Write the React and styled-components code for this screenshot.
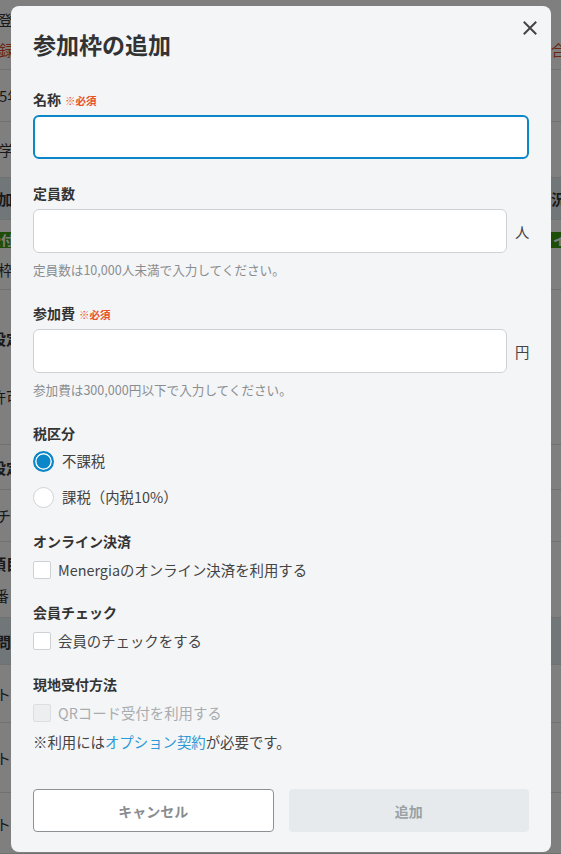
import React from 'react';
import styled, { createGlobalStyle } from 'styled-components';

const GlobalStyle = createGlobalStyle`
  html, body {
    margin: 0;
    padding: 0;
    height: 100%;
    overflow: hidden;
  }
  body {
    font-family: "Noto Sans CJK JP", "Noto Sans", sans-serif;
    color: #333;
    background: #fff;
  }
  * {
    box-sizing: border-box;
  }
`;

// background page rows (only the edges peek out around the dialog)
const bgRows = [
  { h: 70, lines: [{ l: '登録', s: -2, r: '' }, { l: '録', s: -1, r: '合', red: true }] },
  { h: 52, lines: [{ l: '2025年', s: -26, r: '' }] },
  { h: 56, lines: [{ l: '学', s: -1, r: '' }] },
  { h: 42, head: true, lines: [{ l: '参加枠', s: -17, r: '況', bold: true }] },
  { h: 70, lines: [{ l: '受付中', s: -16, r: 'イ', badge: true }, { l: '枠', s: -2, r: '' }] },
  { h: 155, lines: [{ l: '設定', s: -9, r: '', bold: true }, { l: '許可', s: -9, r: '' }] },
  { h: 45, lines: [{ l: '設定', s: -9, r: '', bold: true }] },
  { h: 52, lines: [{ l: 'チャ', s: -4, r: '' }] },
  { h: 76, lines: [{ l: '項目', s: -9, r: '', bold: true }, { l: '番', s: -6, r: '' }] },
  { h: 47, head: true, lines: [{ l: '問文', s: -4, r: '', bold: true }] },
  { h: 58, lines: [{ l: 'ト', s: -4, r: '' }] },
  { h: 70, lines: [{ l: 'ト', s: -4, r: '' }] },
  { h: 61, lines: [{ l: 'ト', s: -4, r: '' }] },
];

const App = () => {
  return (
    <>
      <GlobalStyle />
      <Page>
        {bgRows.map((row, i) => (
          <BgRow key={i} h={row.h} head={row.head}>
            {row.lines.map((ln, j) => (
              <BgLine key={j}>
                {ln.badge ? (
                  <BgBadge shift={ln.s}>{ln.l}</BgBadge>
                ) : (
                  <BgLeft shift={ln.s} bold={ln.bold} red={ln.red}>
                    {ln.l}
                  </BgLeft>
                )}
                {ln.r &&
                  (ln.badge ? (
                    <BgRightBadge>{ln.r}</BgRightBadge>
                  ) : (
                    <BgRight bold={ln.bold} red={ln.red}>
                      {ln.r}
                    </BgRight>
                  ))}
              </BgLine>
            ))}
          </BgRow>
        ))}
      </Page>

      <Overlay>
        <Modal>
          <Title>参加枠の追加</Title>
          <CloseButton aria-label='閉じる'>
            <svg width='14' height='14' viewBox='0 0 14 14'>
              <path
                d='M1.5 1.5 L12.5 12.5 M12.5 1.5 L1.5 12.5'
                stroke='#444'
                strokeWidth='2'
                strokeLinecap='square'
              />
            </svg>
          </CloseButton>

          <Field first>
            <Label>
              名称<Required>※必須</Required>
            </Label>
            <Input focused />
          </Field>

          <Field>
            <Label>定員数</Label>
            <InputRow>
              <Input />
              <Unit>人</Unit>
            </InputRow>
            <Help>定員数は10,000人未満で入力してください。</Help>
          </Field>

          <Field>
            <Label>
              参加費<Required>※必須</Required>
            </Label>
            <InputRow>
              <Input />
              <Unit>円</Unit>
            </InputRow>
            <Help>参加費は300,000円以下で入力してください。</Help>
          </Field>

          <Field>
            <Label tight>税区分</Label>
            <RadioRow>
              <Radio checked />
              <OptionText>不課税</OptionText>
            </RadioRow>
            <RadioRow>
              <Radio />
              <OptionText>課税（内税10%）</OptionText>
            </RadioRow>
          </Field>

          <Field gap={16}>
            <Label>オンライン決済</Label>
            <CheckRow>
              <Check />
              <OptionText>Menergiaのオンライン決済を利用する</OptionText>
            </CheckRow>
          </Field>

          <Field gap={20}>
            <Label>会員チェック</Label>
            <CheckRow>
              <Check />
              <OptionText>会員のチェックをする</OptionText>
            </CheckRow>
          </Field>

          <Field gap={21}>
            <Label>現地受付方法</Label>
            <CheckRow>
              <Check disabled />
              <OptionText disabled>QRコード受付を利用する</OptionText>
            </CheckRow>
            <Note>
              ※利用には<Link>オプション契約</Link>が必要です。
            </Note>
          </Field>

          <Footer>
            <CancelButton>キャンセル</CancelButton>
            <SubmitButton>追加</SubmitButton>
          </Footer>
        </Modal>
      </Overlay>
    </>
  );
};

const Page = styled.div`
  width: 100%;
  height: 100vh;
  overflow: hidden;
  background: #fff;
`;
const BgRow = styled.div`
  height: ${(p) => p.h}px;
  display: flex;
  flex-direction: column;
  justify-content: space-evenly;
  border-bottom: 1px solid #e2e2e2;
  background: ${(p) => (p.head ? '#e3ecf3' : '#fff')};
`;
const BgLine = styled.div`
  display: flex;
  align-items: center;
  height: 20px;
  white-space: nowrap;
`;
const BgLeft = styled.span`
  margin-left: ${(p) => p.shift}px;
  font-size: 15px;
  font-weight: ${(p) => (p.bold ? 700 : 400)};
  color: ${(p) => (p.red ? '#d9482b' : '#333')};
`;
const BgBadge = styled.span`
  margin-left: ${(p) => p.shift}px;
  padding: 0 4px;
  font-size: 13px;
  line-height: 16px;
  font-weight: 700;
  color: #fff;
  background: #3d9b0f;
`;
const BgRight = styled.span`
  margin-left: auto;
  width: 10px;
  font-size: 15px;
  font-weight: ${(p) => (p.bold ? 700 : 400)};
  color: ${(p) => (p.red ? '#d9482b' : '#333')};
  overflow: hidden;
`;
const BgRightBadge = styled.span`
  margin-left: auto;
  width: 10px;
  overflow: hidden;
  padding-left: 2px;
  font-size: 13px;
  line-height: 16px;
  font-weight: 700;
  color: #fff;
  background: #3d9b0f;
`;

const Overlay = styled.div`
  position: fixed;
  inset: 0;
  background: rgba(0, 0, 0, 0.5);
  display: flex;
  align-items: flex-start;
  padding: 6px 0 0 11px;
`;
const Modal = styled.div`
  position: relative;
  width: 540px;
  background: #f4f5f7;
  border-radius: 8px;
  padding: 22px 22px 20px;
  display: flex;
  flex-direction: column;
`;
const Title = styled.h2`
  margin: 0;
  font-size: 23px;
  line-height: 32px;
  font-weight: 700;
  color: #333;
`;
const CloseButton = styled.button`
  position: absolute;
  top: 15px;
  right: 14px;
  width: 14px;
  height: 14px;
  padding: 0;
  border: none;
  background: none;
  display: flex;
  cursor: pointer;
`;
const Field = styled.div`
  display: flex;
  flex-direction: column;
  margin-top: ${(p) => (p.first ? 29 : p.gap ?? 24)}px;
`;
const Label = styled.div`
  height: 20px;
  font-size: 14px;
  line-height: 20px;
  font-weight: 700;
  color: #333;
  margin-bottom: ${(p) => (p.tight ? 0 : 6)}px;
  white-space: nowrap;
`;
const Required = styled.span`
  margin-left: 4px;
  font-size: 10.5px;
  font-weight: 700;
  color: #e8502a;
`;
const InputRow = styled.div`
  display: flex;
  align-items: center;
  gap: 8px;
`;
const Input = styled.input`
  display: block;
  width: 100%;
  min-width: 0;
  height: 44px;
  border-radius: 6px;
  background: #fff;
  font: inherit;
  font-size: 14px;
  padding: 0 12px;
  outline: none;
  border: ${(p) => (p.focused ? '2px solid #0a86c9' : '1px solid #cfd2d4')};
`;
const Unit = styled.span`
  flex-shrink: 0;
  width: 14px;
  font-size: 14.4px;
  color: #444;
`;
const Help = styled.div`
  margin-top: 8px;
  font-size: 12.6px;
  line-height: 18px;
  color: #8a8d8f;
  white-space: nowrap;
`;
const RadioRow = styled.label`
  display: flex;
  align-items: center;
  height: 36px;
  gap: 8px;
`;
const Radio = styled.span`
  width: 21px;
  height: 21px;
  border-radius: 50%;
  flex-shrink: 0;
  ${(p) =>
    p.checked
      ? `
    background: #0a86c9;
    border: 2px solid #0a86c9;
    box-shadow: inset 0 0 0 1.5px #fff;
  `
      : `
    background: #fff;
    border: 1px solid #cfd2d4;
  `}
`;
const OptionText = styled.span`
  font-size: 14.4px;
  line-height: 20px;
  white-space: nowrap;
  color: ${(p) => (p.disabled ? '#a9acae' : '#444')};
`;
const CheckRow = styled.label`
  display: flex;
  align-items: center;
  gap: 7px;
  height: 24px;
  margin-top: 1px;
`;
const Check = styled.span`
  width: 18px;
  height: 18px;
  flex-shrink: 0;
  border-radius: 2px;
  border: 1px solid ${(p) => (p.disabled ? '#dcdfe1' : '#cfd2d4')};
  background: ${(p) => (p.disabled ? '#eceef0' : '#fff')};
`;
const Note = styled.div`
  margin-top: 7px;
  font-size: 14.4px;
  line-height: 20px;
  color: #444;
  white-space: nowrap;
`;
const Link = styled.a`
  color: #2c9ad6;
  text-decoration: none;
`;
const Footer = styled.div`
  display: grid;
  grid-template-columns: 1fr 1fr;
  gap: 15px;
  margin-top: 37px;
`;
const CancelButton = styled.button`
  height: 43px;
  border-radius: 4px;
  border: 1px solid #8e9193;
  background: #fff;
  font: inherit;
  font-size: 14px;
  font-weight: 700;
  color: #8a8d8f;
`;
const SubmitButton = styled.button`
  height: 43px;
  border-radius: 4px;
  border: none;
  background: #e6eaec;
  font: inherit;
  font-size: 14px;
  font-weight: 700;
  color: #9aa2a5;
`;

export default App;
